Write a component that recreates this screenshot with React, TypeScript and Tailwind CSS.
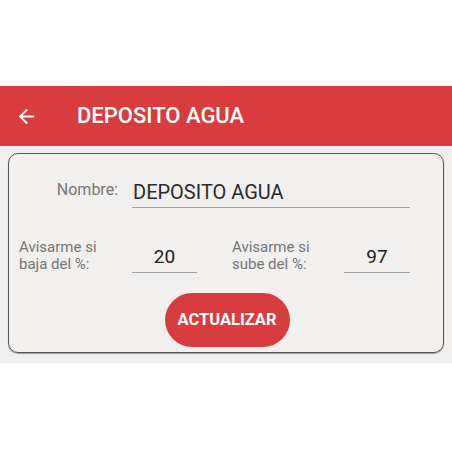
import React from "react";

export default function App() {
  const font = { fontFamily: "Roboto, 'Noto Sans', sans-serif" };
  return (
    <div className="w-[452px] h-[452px] bg-white" style={font}>
      <div className="h-[86px]" />
      <div className="h-[60px] bg-[#d83c3e] flex items-center">
        <div className="w-[77px] flex items-center pl-[15px]">
          <svg width="23" height="23" viewBox="0 0 24 24" fill="white">
            <path d="M20 11H7.83l5.59-5.59L12 4l-8 8 8 8 1.41-1.41L7.83 13H20v-2z" />
          </svg>
        </div>
        <div className="text-white text-[22px] font-medium leading-[24px]">DEPOSITO AGUA</div>
      </div>
      <div className="bg-[#f2f0ef] pt-[7px] pb-[10px] px-[8px]">
        <div className="h-[200px] border border-[#555] rounded-[10px] shadow-[0_1px_1px_rgba(0,0,0,0.35)] pt-[26px] pb-[5px] flex flex-col">
          <div className="flex items-start">
            <div className="w-[109px] text-right text-[16px] leading-[20px] text-[#757575]">Nombre:</div>
            <div className="ml-[14px] w-[278px] h-[28px] border-b-[1.5px] border-[#9e9e9e] text-[20px] leading-[24px] text-[#2a2a2a] pl-[1px]">
              DEPOSITO AGUA
            </div>
          </div>
          <div className="flex items-start mt-[31px] pl-[10px]">
            <div className="w-[113px] text-[15px] leading-[17px] text-[#757575]">
              Avisarme si
              <br />
              baja del %:
            </div>
            <div className="mt-[6px] w-[65px] h-[28px] border-b-[1.5px] border-[#9e9e9e] text-center text-[19px] leading-[24px] text-[#212121]">
              20
            </div>
            <div className="ml-[35px] w-[112px] text-[15px] leading-[17px] text-[#757575]">
              Avisarme si
              <br />
              sube del %:
            </div>
            <div className="mt-[6px] w-[66px] h-[28px] border-b-[1.5px] border-[#9e9e9e] text-center text-[19px] leading-[24px] text-[#212121]">
              97
            </div>
          </div>
          <div className="flex justify-center mt-[20px] pl-[2px]">
            <div className="w-[125px] h-[54px] rounded-full bg-[#d83c3e] flex items-center justify-center text-white font-bold text-[16.5px]">
              ACTUALIZAR
            </div>
          </div>
        </div>
      </div>
    </div>
  );
}
